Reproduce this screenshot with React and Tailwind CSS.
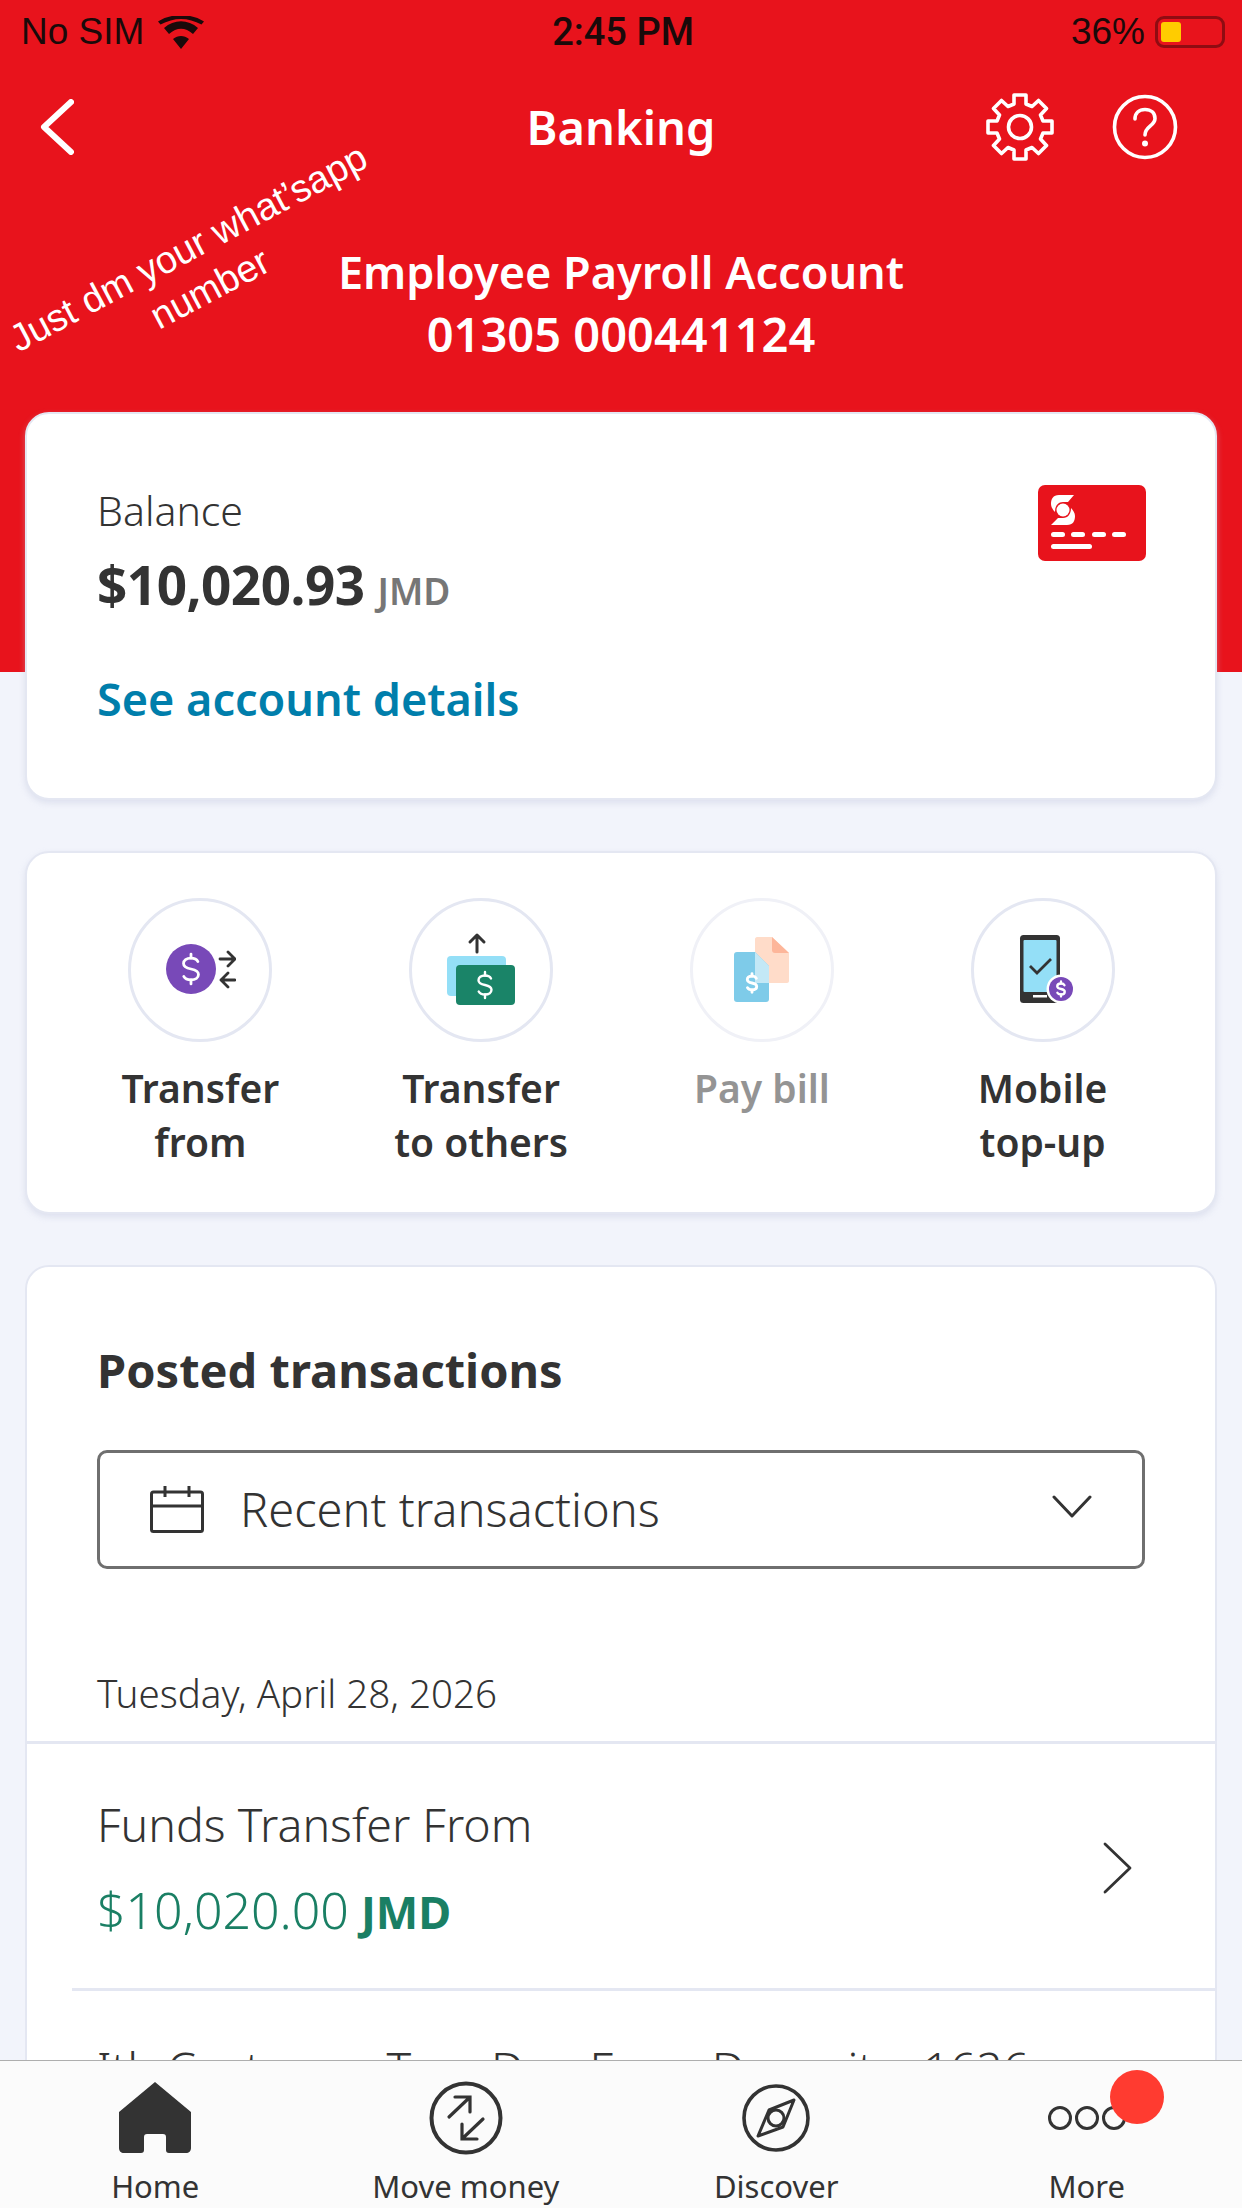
const actions = [
  { lines: ['Transfer', 'from'], icon: <TransferFromIcon /> },
  { lines: ['Transfer', 'to others'], icon: <TransferOthersIcon /> },
  { lines: ['Pay bill'], icon: <PayBillIcon />, disabled: true },
  { lines: ['Mobile', 'top-up'], icon: <MobileIcon /> },
]

const tabs = [
  { label: 'Home', icon: <HomeIcon /> },
  { label: 'Move money', icon: <MoveMoneyIcon /> },
  { label: 'Discover', icon: <CompassIcon /> },
  { label: 'More', icon: <MoreIcon /> },
]

function Dollar({ x, y, s = 1, color = '#fff', width = 2 }) {
  return (
    <g transform={`translate(${x} ${y}) scale(${s})`} fill="none" stroke={color} strokeWidth={width} strokeLinecap="round">
      <path d="M6 -6.5C5 -8.5 3 -9.5 0 -9.5C-4 -9.5 -6.5 -7.5 -6.5 -4.8C-6.5 -2 -4 -0.8 0 0C4 0.8 6.5 2 6.5 4.8C6.5 7.5 4 9.5 0 9.5C-3 9.5 -5.3 8.5 -6.3 6.5" />
      <path d="M0 -13V-9.5M0 9.5V13" />
    </g>
  )
}

function TransferFromIcon() {
  return (
    <svg width="72" height="52" viewBox="-2 0 72 52">
      <circle cx="25" cy="25" r="25" fill="#7849b8" />
      <Dollar x={25} y={25} s={1.15} width={2.4} />
      <g fill="none" stroke="#333" strokeWidth="2.8" strokeLinecap="round" strokeLinejoin="round">
        <path d="M54 15H68M62 8L69 15L62 22" />
        <path d="M69 36H55M62 29L55 36L62 43" />
      </g>
    </svg>
  )
}

function TransferOthersIcon() {
  return (
    <svg width="72" height="76" viewBox="-1 0 72 76">
      <path d="M31 20V3M24 10L31 3L38 10" fill="none" stroke="#333" strokeWidth="3" strokeLinecap="round" strokeLinejoin="round" />
      <rect x="1" y="24" width="59" height="40" rx="4" fill="#94dff7" />
      <rect x="10" y="33" width="59" height="40" rx="4" fill="#1a8468" />
      <Dollar x={39} y={53} s={1} width={2.4} />
    </svg>
  )
}

function PayBillIcon() {
  return (
    <svg width="56" height="66" viewBox="0 0 56 66">
      <path d="M21 2C21 1 22 0 23 0H38L55 16V44C55 45 54 46 53 46H21Z" fill="#ffdcc9" />
      <path d="M38 0L55 16H41C39 16 38 15 38 13Z" fill="#fdb69a" />
      <path d="M3 15H21L35 29V62C35 64 34 65 32 65H3C1 65 0 64 0 62V18C0 16 1 15 3 15Z" fill="#7ecbe9" />
      <path d="M21 15L35 29V46H21Z" fill="#c3e8f6" />
      <Dollar x={18} y={46} s={0.72} width={4} />
    </svg>
  )
}

function MobileIcon() {
  return (
    <svg width="66" height="70" viewBox="-10 0 66 70">
      <rect x="0" y="0" width="40" height="68" rx="3.5" fill="#333" />
      <rect x="3.5" y="5" width="33" height="52" rx="1" fill="#94dff7" />
      <path d="M10 31L17 38L31 24" fill="none" stroke="#333" strokeWidth="2.8" />
      <rect x="13" y="60" width="14" height="2.5" fill="#fff" />
      <circle cx="41" cy="54" r="14.5" fill="#fff" />
      <circle cx="41" cy="54" r="12" fill="#7849b8" />
      <Dollar x={41} y={54} s={0.58} width={4} />
    </svg>
  )
}

function HomeIcon() {
  return (
    <svg width="72" height="72" viewBox="0 0 72 72">
      <path d="M36 0L72 30V66C72 69 70 71 67 71H50C48 71 47 70 47 68V55C47 53 46 52 44 52H28C26 52 25 53 25 55V68C25 70 24 71 22 71H5C2 71 0 69 0 66V30Z" fill="#333" />
    </svg>
  )
}

function MoveMoneyIcon() {
  return (
    <svg width="74" height="74" viewBox="0 0 74 74" fill="none" stroke="#333" strokeLinecap="round">
      <circle cx="37" cy="37" r="34.5" strokeWidth="4" />
      <g strokeWidth="3.2">
        <path d="M20 36L40 17M26 16H41V31" />
        <path d="M54 38L34 57M48 58H33V43" />
      </g>
    </svg>
  )
}

function CompassIcon() {
  return (
    <svg width="68" height="68" viewBox="0 0 68 68" fill="none" stroke="#333">
      <circle cx="34" cy="34" r="32" strokeWidth="3.6" />
      <path d="M52 16L41 43L16 52L27 26Z" strokeWidth="3" strokeLinejoin="round" />
      <circle cx="34" cy="34" r="8" strokeWidth="3" />
    </svg>
  )
}

function MoreIcon() {
  return (
    <svg width="78" height="24" viewBox="0 0 78 24" fill="none" stroke="#333" strokeWidth="3">
      <circle cx="12" cy="12" r="10.5" />
      <circle cx="39" cy="12" r="10.5" />
      <circle cx="66" cy="12" r="10.5" />
    </svg>
  )
}

function BankCardIcon() {
  return (
    <svg width="108" height="76" viewBox="0 0 108 76">
      <rect width="108" height="76" rx="7" fill="#e8131c" />
      <g fill="#fff">
        <path d="M36 10H21C15 10 13 14 13 19C13 22 15 25 17 27C17 21 20 17 25 17H30Z" />
        <path d="M13 40H29C35 40 37 36 37 31C37 28 35 25 33 23C33 29 30 33 25 33H20Z" />
        <circle cx="25" cy="25" r="6.5" />
        <rect x="13" y="47" width="14" height="5" rx="2.5" />
        <rect x="33" y="47" width="14" height="5" rx="2.5" />
        <rect x="54" y="47" width="14" height="5" rx="2.5" />
        <rect x="74" y="47" width="14" height="5" rx="2.5" />
        <rect x="13" y="59" width="41" height="5" rx="2.5" />
      </g>
    </svg>
  )
}

function GearIcon() {
  return (
    <svg width="68" height="68" viewBox="0 0 68 68" fill="none" stroke="#fff" strokeWidth="3.6" strokeLinejoin="round">
      <path d="M28 2H40V11L46 13.5L52.5 7.5L60.5 15.5L54.5 22L57 28H66V40H57L54.5 46L60.5 52.5L52.5 60.5L46 54.5L40 57V66H28V57L22 54.5L15.5 60.5L7.5 52.5L13.5 46L11 40H2V28H11L13.5 22L7.5 15.5L15.5 7.5L22 13.5L28 11Z" />
      <circle cx="34" cy="34" r="11.5" />
    </svg>
  )
}

function HelpIcon() {
  return (
    <svg width="66" height="66" viewBox="0 0 66 66" fill="none" stroke="#fff" strokeWidth="3.6" strokeLinecap="round">
      <circle cx="33" cy="33" r="30.5" />
      <path d="M23 25C23 19 27 15.5 33 15.5C39 15.5 43 19 43 24.5C43 32 33 32 33 41" />
      <circle cx="33" cy="49.5" r="1.2" fill="#fff" />
    </svg>
  )
}

function CalendarIcon() {
  return (
    <svg width="54" height="47" viewBox="0 0 54 47" fill="none" stroke="#333" strokeWidth="3">
      <rect x="1.5" y="6" width="51" height="39.5" rx="2" />
      <path d="M1.5 20H52.5M15 0V11M39 0V11" />
    </svg>
  )
}

function StatusBar() {
  return (
    <div className="flex h-[64px] items-center justify-between pl-[21px] pr-[17px] font-['Liberation_Sans',sans-serif] text-[37px] text-[#1a0a0a]">
      <div className="flex w-[300px] items-center gap-[14px]">
        <span>No SIM</span>
        <svg width="46" height="33" viewBox="0 0 46 33">
          <path d="M23 33L15 23C20 19 26 19 31 23ZM11 18L6 12C16 3 30 3 40 12L35 18C27 11 19 11 11 18ZM2.5 8.5L0 5.5C13 -3 33 -3 46 5.5L43.5 8.5C30 1 16 1 2.5 8.5Z" fill="#1a0a0a" />
        </svg>
      </div>
      <span className="font-['Roboto',sans-serif] text-[38px] font-medium">2:45 PM</span>
      <div className="flex w-[300px] items-center justify-end gap-[10px]">
        <span>36%</span>
        <div className="flex h-[32px] w-[70px] items-center rounded-[9px] border-[3px] border-[#8f0c12] p-[3px]">
          <div className="h-full w-[20px] rounded-[3px] bg-[#ffcc00]" />
        </div>
      </div>
    </div>
  )
}

export default function App() {
  return (
    <div className="relative h-[2208px] overflow-hidden bg-[#f2f4fb] font-['Noto_Sans',sans-serif] text-[#333]">
      <div className="h-[672px] bg-[#e8131c]">
        <StatusBar />
        <div className="mt-[28px] grid h-[70px] grid-cols-[1fr_auto_1fr] items-center px-[40px] text-white">
          <svg width="34" height="56" viewBox="0 0 34 56" fill="none" stroke="#fff" strokeWidth="6" strokeLinecap="round" strokeLinejoin="round">
            <path d="M31 3L4 28L31 53" />
          </svg>
          <h1 className="text-[47px] leading-[70px] font-semibold">Banking</h1>
          <div className="flex items-center justify-end gap-[58px] pr-[24px]">
            <GearIcon />
            <HelpIcon />
          </div>
        </div>
        <div className="mt-[78px] text-center leading-[63px] font-semibold text-white">
          <div className="text-[45px]">Employee Payroll Account</div>
          <div className="text-[47px]">01305 000441124</div>
        </div>
      </div>

      <div className="absolute top-[268px] left-[199px] w-[500px] -translate-x-1/2 -translate-y-1/2 -rotate-[28deg] text-center font-['Liberation_Sans',sans-serif] text-[38px] leading-[46px] text-white">
        Just dm your what’sapp
        <br />
        number
      </div>

      <main className="-mt-[260px] flex flex-col gap-[51px] px-[25px]">
        <section className="h-[388px] rounded-[24px] border-2 border-[#e4e7f2] bg-white pt-[71px] pr-[69px] pl-[70px] shadow-[0_3px_6px_rgba(190,195,220,0.4)]">
          <div className="flex items-start justify-between">
            <div>
              <div className="text-[41px] leading-[50px] font-light">Balance</div>
              <div className="mt-[20px] flex items-baseline gap-[13px] leading-[60px]">
                <span className="text-[53px] font-bold tracking-[-0.5px]">$10,020.93</span>
                <span className="text-[37px] font-semibold text-[#767676]">JMD</span>
              </div>
            </div>
            <BankCardIcon />
          </div>
          <div className="mt-[48px] text-[45px] leading-[60px] font-semibold text-[#007eab]">See account details</div>
        </section>

        <section className="grid h-[363px] grid-cols-4 rounded-[24px] border-2 border-[#e4e7f2] bg-white pt-[45px] pr-[32px] pl-[33px] shadow-[0_3px_6px_rgba(190,195,220,0.4)]">
          {actions.map((action) => (
            <div key={action.lines.join(' ')} className={`flex flex-col items-center ${action.disabled ? 'text-[#949494]' : ''}`}>
              <div className={`flex h-[144px] w-[144px] items-center justify-center rounded-full border-[3px] ${action.disabled ? 'border-[#f0f1f7]' : 'border-[#e4e7f2]'}`}>
                {action.icon}
              </div>
              <div className="mt-[19px] text-center text-[39px] leading-[54px] font-semibold">
                {action.lines.map((line) => (
                  <div key={line}>{line}</div>
                ))}
              </div>
            </div>
          ))}
        </section>

        <section className="h-[1000px] rounded-[24px] border-2 border-[#e4e7f2] bg-white pt-[73px]">
          <h2 className="px-[70px] text-[47px] leading-[60px] font-bold">Posted transactions</h2>
          <div className="mx-[70px] mt-[50px] flex h-[119px] items-center rounded-[10px] border-[3px] border-[#6f6f6f] pr-[50px] pl-[50px]">
            <CalendarIcon />
            <span className="ml-[36px] flex-1 text-[47px] font-light">Recent transactions</span>
            <svg width="40" height="24" viewBox="0 0 40 24" fill="none" stroke="#333" strokeWidth="3" strokeLinecap="round" strokeLinejoin="round" className="-mt-[6px]">
              <path d="M2 2L20 21L38 2" />
            </svg>
          </div>
          <div className="mt-[99px] px-[70px] text-[38.5px] leading-[50px] font-light">Tuesday, April 28, 2026</div>
          <div className="mt-[23px] h-[3px] bg-[#e4e7f2]" />

          <div className="flex items-center justify-between pt-[50px] pr-[83px] pb-[46px] pl-[70px]">
            <div>
              <div className="text-[46.5px] leading-[60px] font-light">Funds Transfer From</div>
              <div className="mt-[26px] flex items-baseline gap-[12px] leading-[60px] text-[#1a7f64]">
                <span className="text-[50px] font-light">$10,020.00</span>
                <span className="text-[45px] font-bold">JMD</span>
              </div>
            </div>
            <svg width="29" height="52" viewBox="0 0 29 52" fill="none" stroke="#333" strokeWidth="2.8" strokeLinecap="round" strokeLinejoin="round">
              <path d="M2 2L27 26L2 50" />
            </svg>
          </div>
          <div className="ml-[45px] h-[3px] bg-[#e4e7f2]" />
          <div className="pt-[47px] pl-[70px] text-[46.5px] leading-[60px] font-light">Ith Customer Tran Dep From Deposit a 1626</div>
        </section>
      </main>

      <nav className="absolute inset-x-0 bottom-0 grid h-[148px] grid-cols-4 border-t border-[#aeaeae] bg-[#fbfbfb]">
        {tabs.map((tab) => (
          <div key={tab.label} className="flex flex-col items-center">
            <div className="flex h-[94px] items-center pt-[20px]">
              {tab.icon}
            </div>
            <span className="mt-[11px] text-[31px] leading-[40px]">{tab.label}</span>
          </div>
        ))}
      </nav>

      <div className="absolute top-[2070px] left-[1110px] h-[54px] w-[54px] rounded-full bg-[#ff3b30]" />
    </div>
  )
}
